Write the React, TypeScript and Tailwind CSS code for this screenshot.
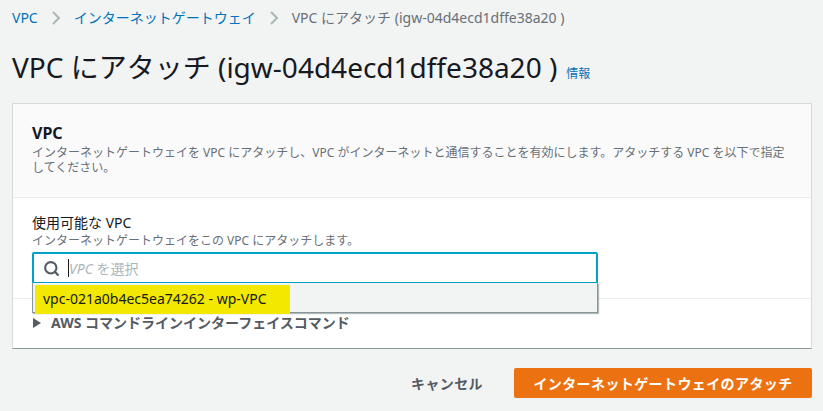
import React from 'react';
import { Search } from 'lucide-react';

const FONT = "font-['Noto_Sans','Noto_Sans_CJK_JP',sans-serif]";

const Chevron: React.FC = () => (
  <svg viewBox="0 0 10 16" className="w-[10px] h-[16px] mx-[13px] fill-none stroke-[#aab7b8] stroke-2">
    <path d="M2 2 L8 8 L2 14" />
  </svg>
);

const App: React.FC = () => {
  return (
    <div className={`${FONT} w-[823px] h-[411px] overflow-hidden bg-[#f2f3f3] px-3 text-[#16191f]`}>
      {/* Breadcrumbs */}
      <nav className="flex items-center h-[36px] text-[14px] leading-[20px]">
        <span className="text-[#0073bb]">VPC</span>
        <Chevron />
        <span className="text-[#0073bb]">インターネットゲートウェイ</span>
        <Chevron />
        <span className="text-[#687078]">VPC にアタッチ (igw-04d4ecd1dffe38a20 )</span>
      </nav>

      {/* Title */}
      <div className="flex items-baseline mt-[11px] h-[40px]">
        <h1 className="text-[28px] leading-[40px] font-normal">VPC にアタッチ (igw-04d4ecd1dffe38a20 )</h1>
        <span className="ml-[9px] text-[12px] text-[#0073bb]">情報</span>
      </div>

      {/* Card */}
      <section className="mt-[16px] w-[800px] h-[246px] bg-white border border-[#d5dbdb] border-b-[#879596] flex flex-col">
        <div className="h-[94px] bg-[#fafafa] border-b border-[#eaeded] pl-[19px] pr-5 pt-[18px]">
          <h2 className="text-[16px] leading-[22px] font-bold">VPC</h2>
          <p className="mt-[1px] text-[12px] leading-[15px] text-[#687078]">
            インターネットゲートウェイを VPC にアタッチし、VPC がインターネットと通信することを有効にします。アタッチする VPC を以下で指定してください。
          </p>
        </div>

        <div className="relative h-[101px] border-b border-[#eaeded] pl-[19px] pr-5 pt-[16px]">
          <label className="block text-[14px] leading-[18px]">使用可能な VPC</label>
          <p className="text-[12px] leading-[17px] text-[#687078]">インターネットゲートウェイをこの VPC にアタッチします。</p>
          <div className="relative mt-[3px] w-[566px] h-[32px] bg-white border-2 border-[#00a1c9] rounded-[2px] flex items-center pl-[9px]">
            <Search className="w-[17px] h-[17px] text-[#545b64]" strokeWidth={3} />
            <span className="ml-[8px] w-px h-[18px] bg-[#16191f]" />
            <span className="text-[14px] text-[#aab7b8]"><i>VPC</i> を選択</span>
          </div>
          {/* Open dropdown lies over the card's divider */}
          <div className="absolute left-[19px] top-[85px] w-[566px] h-[30px] bg-[#f2f3f3] border-x border-b border-[#879596] shadow-[1px_1px_1px_rgba(0,28,36,0.3)] z-10">
            <div className="ml-[2px] mt-[2px] w-[255px] h-[29px] bg-[#f2e800] pl-[8px] text-[14px] leading-[27px]">
              vpc-021a0b4ec5ea74262 - wp-VPC
            </div>
          </div>
        </div>

        <div className="flex items-center pl-[20px] pt-[14px] text-[14px] leading-[20px] font-bold text-[#545b64]">
          <svg viewBox="0 0 8 10" className="w-[8px] h-[10px] mr-[10px] fill-[#545b64]">
            <path d="M0 0 L8 5 L0 10 Z" />
          </svg>
          AWS コマンドラインインターフェイスコマンド
        </div>
      </section>

      {/* Actions */}
      <div className="flex items-center justify-end w-[800px] mt-[19px]">
        <span className="text-[14px] font-bold tracking-[0.4px] text-[#545b64]">キャンセル</span>
        <button className="ml-[31px] w-[298px] h-[30px] bg-[#ec7211] rounded-[2px] text-[14px] font-bold tracking-[0.4px] text-white">
          インターネットゲートウェイのアタッチ
        </button>
      </div>
    </div>
  );
};

export default App;
